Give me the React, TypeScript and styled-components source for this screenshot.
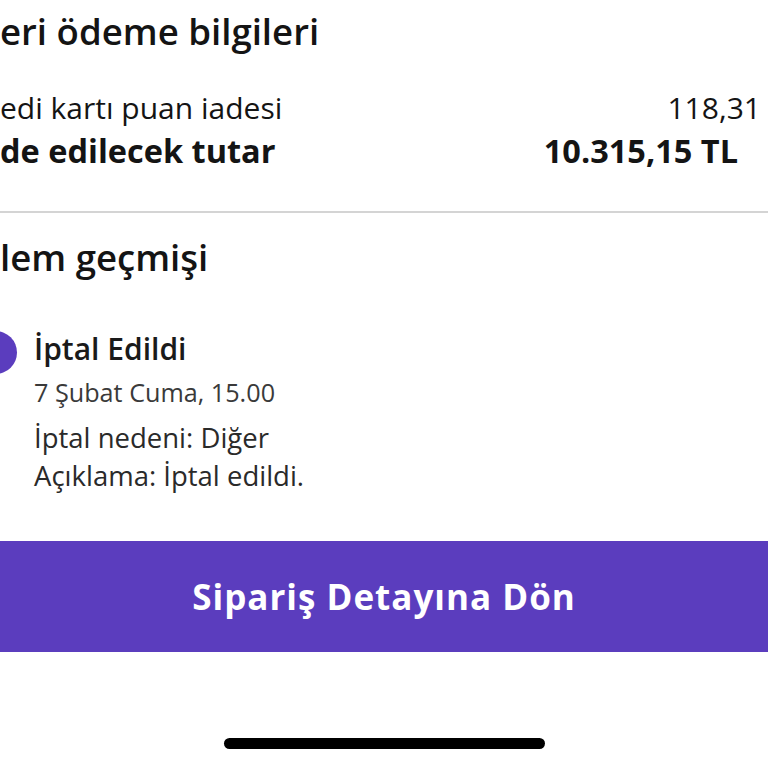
import React from "react";
import styled, { createGlobalStyle } from "styled-components";

const GlobalStyle = createGlobalStyle`
  html, body {
    margin: 0;
    padding: 0;
    background: #ffffff;
    overflow: hidden;
  }
  body {
    font-family: "Open Sans", "Noto Sans", sans-serif;
    color: #141414;
  }
`;

const Screen = styled.div`
  position: relative;
  width: 768px;
  height: 768px;
  display: flex;
  flex-direction: column;
  overflow: hidden;
`;

const Section = styled.section<{ $top?: number }>`
  padding: ${({ $top }) => $top ?? 0}px 30px 0 0;
  display: flex;
  flex-direction: column;
`;

const SectionTitle = styled.h2`
  margin: 0;
  font-size: 36.6px;
  line-height: 48px;
  font-weight: 600;
  color: #141414;
`;

const Rows = styled.div`
  margin-top: 31px;
  display: flex;
  flex-direction: column;
`;

const Row = styled.div<{ $bold?: boolean }>`
  display: flex;
  justify-content: space-between;
  align-items: baseline;
  font-size: ${({ $bold }) => ($bold ? 32.5 : 30)}px;
  line-height: 43px;
  font-weight: ${({ $bold }) => ($bold ? 700 : 400)};
`;

const Value = styled.span<{ $shift?: number }>`
  margin-right: ${({ $shift }) => ($shift ? `-${$shift}px` : "0")};
`;

const Divider = styled.hr`
  margin: 39px 0 20px;
  border: 0;
  height: 2px;
  background: #d4d4d4;
`;

const Event = styled.div`
  margin-top: 49px;
  display: flex;
  gap: 17px;
`;

const Dot = styled.span`
  flex-shrink: 0;
  width: 43px;
  height: 43px;
  margin-top: 1px;
  margin-left: -26px;
  border-radius: 50%;
  background: #5b3dbe;
`;

const EventBody = styled.div`
  display: flex;
  flex-direction: column;
`;

const EventTitle = styled.div`
  font-size: 30px;
  line-height: 38px;
  font-weight: 600;
  color: #1a1a1a;
`;

const EventDate = styled.div`
  margin-top: 8px;
  font-size: 25.2px;
  line-height: 32px;
  color: #3a3a3a;
`;

const EventNote = styled.div`
  margin-top: 11px;
  font-size: 27.5px;
  line-height: 38px;
  color: #2a2a2a;
`;

const BackButton = styled.button`
  margin-top: 46px;
  width: 100%;
  height: 111px;
  border: 0;
  background: #5b3dbe;
  color: #ffffff;
  font-family: "Open Sans", "Noto Sans", sans-serif;
  font-size: 35px;
  letter-spacing: 1px;
  font-weight: 700;
  cursor: pointer;
`;

const HomeIndicator = styled.div`
  position: absolute;
  left: 224px;
  top: 738px;
  width: 321px;
  height: 11px;
  border-radius: 6px;
  background: #000000;
`;

export default function App() {
  return (
    <>
      <GlobalStyle />
      <Screen>
        <Section $top={7}>
          <SectionTitle>eri ödeme bilgileri</SectionTitle>
          <Rows>
            <Row>
              <span>edi kartı puan iadesi</span>
              <Value $shift={23}>118,31</Value>
            </Row>
            <Row $bold>
              <span>de edilecek tutar</span>
              <Value>10.315,15 TL</Value>
            </Row>
          </Rows>
        </Section>
        <Divider />
        <Section>
          <SectionTitle>lem geçmişi</SectionTitle>
          <Event>
            <Dot />
            <EventBody>
              <EventTitle>İptal Edildi</EventTitle>
              <EventDate>7 Şubat Cuma, 15.00</EventDate>
              <EventNote>
                İptal nedeni: Diğer
                <br />
                Açıklama: İptal edildi.
              </EventNote>
            </EventBody>
          </Event>
        </Section>
        <BackButton>Sipariş Detayına Dön</BackButton>
        <HomeIndicator />
      </Screen>
    </>
  );
}
